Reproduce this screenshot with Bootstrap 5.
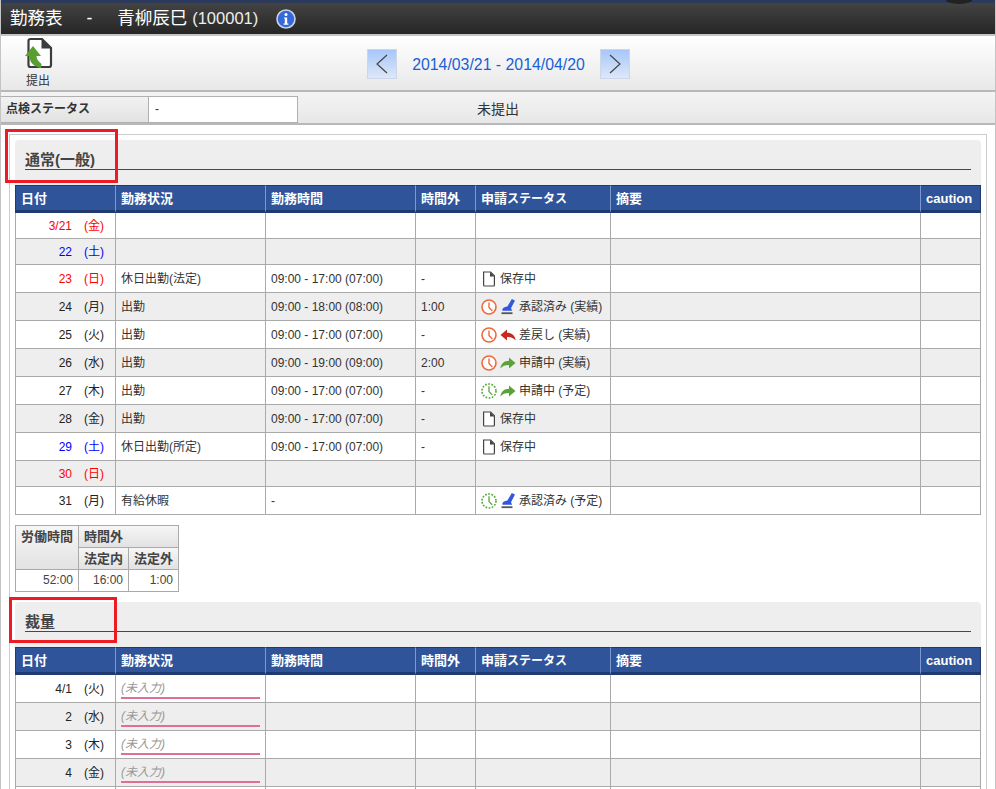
<!DOCTYPE html>
<html lang="ja">
<head>
<meta charset="utf-8">
<title>勤務表</title>
<link href="https://cdn.jsdelivr.net/npm/bootstrap@5.3.0/dist/css/bootstrap.min.css" rel="stylesheet">
<style>
html,body{margin:0;height:789px;overflow:hidden;background:#fff}
body{font-family:"Liberation Sans","Noto Sans CJK JP",sans-serif;font-size:12px;color:#333;line-height:1.2}
.ws-page{position:relative;height:789px;overflow:hidden;border-left:1px solid #c4c4c4;border-right:1px solid #c4c4c4}
.ws-topline{height:3px;background:#2c3a5c;margin-left:-1px;margin-right:-1px}
.ws-head{height:31px;background:linear-gradient(#434343,#262626);color:#fff;font-size:17.5px;padding-left:10px;margin-left:-1px;margin-right:-1px;white-space:pre}
.ws-avatar{position:absolute;top:-6px;right:22px;width:28px;height:10px;border-radius:50%;background:#222}
.ws-latin{font-size:16.5px;color:#eee}
.ws-dash{margin-left:24px}
.ws-name{margin-left:25px}
.ws-info{width:20px;height:20px;margin-left:18px}
.ws-tool{height:54px;background:linear-gradient(#fff,#e8e8e8);border-top:2px solid #c4c4c4;border-bottom:2px solid #b8b8b8;display:grid;grid-template-columns:1fr auto 1fr;box-sizing:content-box;padding-left:1px}
.ws-submit{width:72px;color:#333}
.ws-submit svg{display:block;width:30px;height:32px;margin:1px 0 5px 22px}
.ws-range{font-size:15.85px;color:#1a5fd6;gap:15px;margin-top:2px}
.ws-pager{width:30px;height:30px;background:linear-gradient(#a7c6f8,#dde8f9);border:1px solid #ccd6e8;padding:0}
.ws-pager svg{width:14px;height:20px;display:block;margin:auto}
.ws-status{background:linear-gradient(#f4f4f4,#e7e7e7);border-bottom:2px solid #b8b8b8;box-sizing:content-box;padding-top:4px;height:27px}
.ws-slabel{width:148px;height:27px;padding-left:5px;font-weight:700;background:linear-gradient(#f2f2f2,#e2e2e2);border:1px solid #b0b0b0;border-left:0}
.ws-svalue{width:149px;height:27px;padding-left:6px;background:#fff;border:1px solid #b0b0b0;border-left:0}
.ws-sstate{width:400px;font-size:14px}
.ws-frame{margin:9px 8px 0;padding:5px 5px 0;border:1px solid #ccc;border-bottom:0}
.ws-section{height:45px;width:966px;background:#eee;border-radius:4px 4px 0 0;padding:10px 10px 0}
.ws-title{font-size:15px;font-weight:700;color:#444;height:19px;border-bottom:1px solid #2b4a8c;line-height:19px;box-sizing:content-box}
.ws-table{table-layout:fixed;width:966px;border-collapse:separate;border-spacing:0;margin:0}
.ws-table th{background:#30549a;color:#fff;font-weight:700;font-size:13px;height:28px;padding:2px 5px 0;border-top:1px solid #1f3a70;border-right:1px solid #7c98cf;border-bottom:3px solid #1f3a70;vertical-align:middle}
.ws-table th:first-child{border-left:1px solid #1f3a70}
.ws-table th:last-child{border-right-color:#1f3a70}
.ws-n12{font-size:12px}
.ws-table td{height:28px;padding:1px 5px 0;border-right:1px solid #aaa;border-bottom:1px solid #aaa;vertical-align:middle;white-space:nowrap}
.ws-table td:first-child{border-left:1px solid #aaa}
.ws-table tr.ws-thin td{height:26px}
.ws-table tr.ws-odd td{background:#eee}
.ws-table td.ws-date{text-align:right;padding-right:11px}
.ws-date span{margin-left:12px}
.ws-sat{color:#00f}.ws-sun{color:#f00}.ws-blk{color:#222}
.w1{width:101px}.w2{width:150px}.w3{width:150px}.w4{width:60px}.w5{width:135px}.w6{width:310px}.w7{width:60px}
.ws-ic{width:16px;height:16px;vertical-align:-4px;margin-right:3px}
.ws-empty{display:block;color:#999;font-style:italic;border-bottom:2px solid #e06f96;height:20px;line-height:18px;margin-bottom:1px;width:139px}
.ws-sum{border-collapse:separate;border-spacing:0;margin:10px 0;width:164px;table-layout:fixed;border-top:1px solid #aaa;border-left:1px solid #aaa}
.ws-sum th{font-size:13px;font-weight:700;color:#444;background:linear-gradient(#f6f6f6,#e2e2e2);border-right:1px solid #aaa;border-bottom:1px solid #aaa;vertical-align:top;padding:3px 0 0 5px;height:22px}
.ws-sum td{height:22px;padding:0 5px;text-align:right;border-right:1px solid #aaa;border-bottom:1px solid #aaa;color:#444}
.s1{width:63px}.s2{width:50px}.s3{width:50px}
.ws-redbox{position:absolute;border:3px solid #ed1c24;pointer-events:none}
.ws-red1{left:4px;top:129px;width:113px;height:54px}
.ws-red2{left:8px;top:597px;width:108px;height:46px}
</style>
</head>
<body>
<svg width="0" height="0" class="position-absolute">
<defs>
<symbol id="i-doc" viewBox="0 0 16 16"><path d="M2.600 1h7L13.400 4.800v9.400a.8.8 0 0 1-.8.8H3.400a.8.8 0 0 1-.8-.8z" fill="#fff" stroke="#444" stroke-width="1.200"/><path d="M9 1V5.400H13.400z" fill="#444"/></symbol>
<symbol id="i-clock" viewBox="0 0 16 16"><circle cx="8" cy="8" r="7" fill="#fff" stroke="#ec6a3c" stroke-width="1.600"/><path d="M8 3.400V8.400L11.300 12" fill="none" stroke="#ec6a3c" stroke-width="1.400"/></symbol>
<symbol id="i-clockg" viewBox="0 0 16 16"><circle cx="8" cy="8" r="7" fill="#fff" stroke="#58a83a" stroke-width="1.700" stroke-dasharray="1.700 1.500"/><path d="M8 3.200V8.600L11.200 11.800" fill="none" stroke="#58a83a" stroke-width="1.300"/></symbol>
<symbol id="i-stamp" viewBox="0 0 16 16"><path d="M11.800 0l3.200 1.600-4 7.600 1.200 2.600H2.400C2 9.400 3.600 8 7.400 7.600z" fill="#2f57e0"/><path d="M1.500 14.200h11" stroke="#555" stroke-width="1.800"/></symbol>
<symbol id="i-back" viewBox="0 0 16 16"><path d="M.5 8L7 2.500V5.800C11.500 5.800 15 8.500 15.700 13.500 13.500 11 11 10 7 10V13.500z" fill="#c9281c"/></symbol>
<symbol id="i-fwd" viewBox="0 0 16 16"><path d="M15.500 8L9 2.500V5.800C4.500 5.800 1 8.500 .3 13.500 2.500 11 5 10 9 10V13.500z" fill="#5aa33a"/></symbol>
</defs>
</svg>
<div class="ws-page">
<div class="ws-topline"></div>
<div class="ws-head d-flex align-items-center"><span>勤務表</span><span class="ws-dash">-</span><span class="ws-name">青柳辰巳 <span class="ws-latin">(100001)</span></span>
<svg class="ws-info" viewBox="0 0 20 20"><circle cx="10" cy="10" r="9" fill="#3668d8" stroke="#c9d3e6" stroke-width="1.600"/><circle cx="10" cy="5.600" r="1.500" fill="#fff"/><path d="M8 8.400h3.200v6.200h1.200v1.200H7.600v-1.200h1.200v-5H8z" fill="#fff"/></svg></div>
<div class="ws-avatar"></div>
<div class="ws-tool">
<div><div class="ws-submit text-center">
<svg viewBox="0 0 30 32"><path d="M6.500 2H18L27 11V28a2 2 0 0 1-2 2H6.500a2 2 0 0 1-2-2V4a2 2 0 0 1 2-2z" fill="#fff" stroke="#3c3c3c" stroke-width="2.200"/><path d="M17.500 2V11.500H27z" fill="#3c3c3c"/><path d="M1 19L9 9l8 10h-4.500c0 3 1.800 5.500 5 8l-.5 4C10 30 5.500 25.500 5.500 19z" fill="#57a02f"/></svg>
<div>提出</div></div></div>
<div class="ws-range d-flex align-items-center">
<button class="ws-pager" type="button" aria-label="前"><svg viewBox="0 0 14 20"><path d="M12 1L2 10l10 9" fill="none" stroke="#444" stroke-width="1.200"/></svg></button>
<span>2014/03/21 - 2014/04/20</span>
<button class="ws-pager" type="button" aria-label="次"><svg viewBox="0 0 14 20"><path d="M2 1l10 9-10 9" fill="none" stroke="#444" stroke-width="1.200"/></svg></button>
</div>
<div></div>
</div>
<div class="ws-status d-flex">
<div class="ws-slabel d-flex align-items-center">点検ステータス</div>
<div class="ws-svalue d-flex align-items-center">-</div>
<div class="ws-sstate d-flex align-items-center justify-content-center">未提出</div>
</div>
<div class="ws-frame">
<div class="ws-section"><div class="ws-title">通常(一般)</div></div>
<table class="ws-table">
<colgroup><col class="w1"><col class="w2"><col class="w3"><col class="w4"><col class="w5"><col class="w6"><col class="w7"></colgroup>
<thead><tr><th>日付</th><th>勤務状況</th><th>勤務時間</th><th>時間外</th><th>申請<span class="ws-n12">ステータス</span></th><th>摘要</th><th class="ws-n12">caution</th></tr></thead>
<tbody>
<tr class="ws-thin"><td class="ws-date ws-sun">3/21<span>(金)</span></td><td></td><td></td><td></td><td></td><td></td><td></td></tr>
<tr class="ws-thin ws-odd"><td class="ws-date ws-sat">22<span>(土)</span></td><td></td><td></td><td></td><td></td><td></td><td></td></tr>
<tr><td class="ws-date ws-sun">23<span>(日)</span></td><td>休日出勤(法定)</td><td>09:00 - 17:00 (07:00)</td><td>-</td><td><svg class="ws-ic"><use href="#i-doc"/></svg>保存中</td><td></td><td></td></tr>
<tr class="ws-odd"><td class="ws-date ws-blk">24<span>(月)</span></td><td>出勤</td><td>09:00 - 18:00 (08:00)</td><td>1:00</td><td><svg class="ws-ic"><use href="#i-clock"/></svg><svg class="ws-ic"><use href="#i-stamp"/></svg>承認済み (実績)</td><td></td><td></td></tr>
<tr><td class="ws-date ws-blk">25<span>(火)</span></td><td>出勤</td><td>09:00 - 17:00 (07:00)</td><td>-</td><td><svg class="ws-ic"><use href="#i-clock"/></svg><svg class="ws-ic"><use href="#i-back"/></svg>差戻し (実績)</td><td></td><td></td></tr>
<tr class="ws-odd"><td class="ws-date ws-blk">26<span>(水)</span></td><td>出勤</td><td>09:00 - 19:00 (09:00)</td><td>2:00</td><td><svg class="ws-ic"><use href="#i-clock"/></svg><svg class="ws-ic"><use href="#i-fwd"/></svg>申請中 (実績)</td><td></td><td></td></tr>
<tr><td class="ws-date ws-blk">27<span>(木)</span></td><td>出勤</td><td>09:00 - 17:00 (07:00)</td><td>-</td><td><svg class="ws-ic"><use href="#i-clockg"/></svg><svg class="ws-ic"><use href="#i-fwd"/></svg>申請中 (予定)</td><td></td><td></td></tr>
<tr class="ws-odd"><td class="ws-date ws-blk">28<span>(金)</span></td><td>出勤</td><td>09:00 - 17:00 (07:00)</td><td>-</td><td><svg class="ws-ic"><use href="#i-doc"/></svg>保存中</td><td></td><td></td></tr>
<tr><td class="ws-date ws-sat">29<span>(土)</span></td><td>休日出勤(所定)</td><td>09:00 - 17:00 (07:00)</td><td>-</td><td><svg class="ws-ic"><use href="#i-doc"/></svg>保存中</td><td></td><td></td></tr>
<tr class="ws-thin ws-odd"><td class="ws-date ws-sun">30<span>(日)</span></td><td></td><td></td><td></td><td></td><td></td><td></td></tr>
<tr><td class="ws-date ws-blk">31<span>(月)</span></td><td>有給休暇</td><td>-</td><td></td><td><svg class="ws-ic"><use href="#i-clockg"/></svg><svg class="ws-ic"><use href="#i-stamp"/></svg>承認済み (予定)</td><td></td><td></td></tr>
</tbody>
</table>
<table class="ws-sum">
<colgroup><col class="s1"><col class="s2"><col class="s3"></colgroup>
<tr><th rowspan="2">労働時間</th><th colspan="2">時間外</th></tr>
<tr><th>法定内</th><th>法定外</th></tr>
<tr><td>52:00</td><td>16:00</td><td>1:00</td></tr>
</table>
<div class="ws-section"><div class="ws-title">裁量</div></div>
<table class="ws-table">
<colgroup><col class="w1"><col class="w2"><col class="w3"><col class="w4"><col class="w5"><col class="w6"><col class="w7"></colgroup>
<thead><tr><th>日付</th><th>勤務状況</th><th>勤務時間</th><th>時間外</th><th>申請<span class="ws-n12">ステータス</span></th><th>摘要</th><th class="ws-n12">caution</th></tr></thead>
<tbody>
<tr><td class="ws-date ws-blk">4/1<span>(火)</span></td><td><span class="ws-empty">(未入力)</span></td><td></td><td></td><td></td><td></td><td></td></tr>
<tr class="ws-odd"><td class="ws-date ws-blk">2<span>(水)</span></td><td><span class="ws-empty">(未入力)</span></td><td></td><td></td><td></td><td></td><td></td></tr>
<tr><td class="ws-date ws-blk">3<span>(木)</span></td><td><span class="ws-empty">(未入力)</span></td><td></td><td></td><td></td><td></td><td></td></tr>
<tr class="ws-odd"><td class="ws-date ws-blk">4<span>(金)</span></td><td><span class="ws-empty">(未入力)</span></td><td></td><td></td><td></td><td></td><td></td></tr>
<tr><td class="ws-date ws-blk"></td><td></td><td></td><td></td><td></td><td></td><td></td></tr>
</tbody>
</table>
</div>
<div class="ws-redbox ws-red1"></div>
<div class="ws-redbox ws-red2"></div>
</div>
<script src="https://cdn.jsdelivr.net/npm/bootstrap@5.3.0/dist/js/bootstrap.bundle.min.js"></script>
</body>
</html>
